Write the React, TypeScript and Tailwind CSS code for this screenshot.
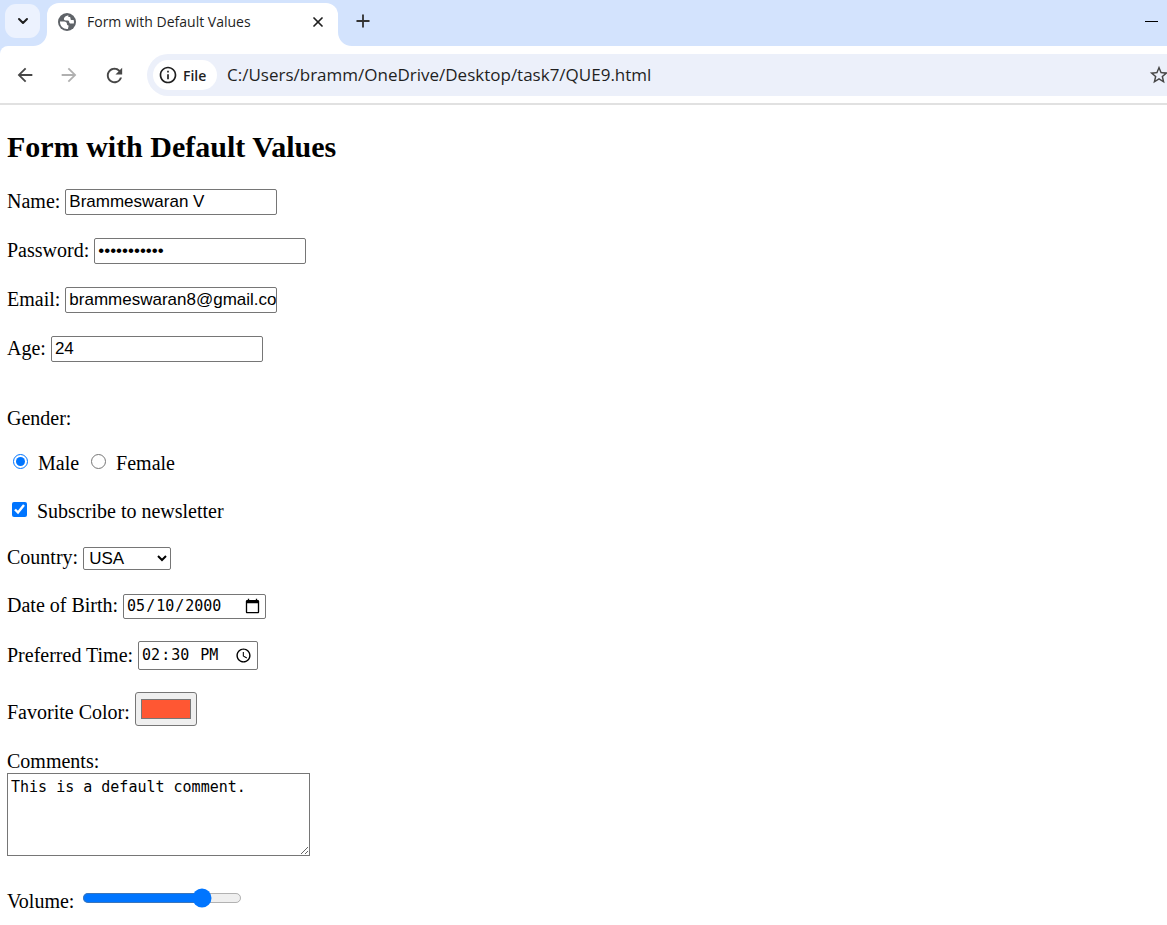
import React from "react";
import { MdArrowBack, MdArrowForward, MdRefresh, MdOutlineInfo, MdStarOutline } from "react-icons/md";
import { ChevronDown, Plus, X } from "lucide-react";

const box = "border border-[#767676] rounded-[2px] bg-white text-black outline-none";
const textBox = "h-[26px] w-[212px] pl-[3px] font-['Liberation_Sans',Arial,sans-serif] text-[17px] leading-5";
const mono = "font-['DejaVu_Sans_Mono',monospace] text-[15px]";
const picker = "[&::-webkit-calendar-picker-indicator]:size-[17px]";

function Globe() {
  return (
    <svg viewBox="0 0 18 18" className="size-[18px] shrink-0" aria-hidden="true">
      <circle cx="9" cy="9" r="9" fill="#5f6368" />
      <path
        d="M10.500 2.200C8.500 2.600 6.500 3.800 6 5.200c-.4 1.300.5 2.300 1.800 2.300h1.700c1.100 0 1.700.6 1.700 1.600 0 .9.6 1.500 1.500 1.500h3.100c.3-1.300.2-2.500-.1-3.600h-1.600c-1.100 0-1.600-.6-1.600-1.600 0-.8-.5-1.300-1.300-1.300-.9 0-1.300-1-.7-1.900z"
        fill="#fff"
      />
      <path
        d="M2 8.600h4.200c1.700 0 2.800 1 2.800 2.600 0 .7.300 1 .9 1.100.6.1.8.5.6 1.100l-.6 2.500c-.3.1-.6.100-.9.100C5.100 16 2 12.900 2 9z"
        fill="#fff"
      />
    </svg>
  );
}

function Flare({ className }: { className: string }) {
  return (
    <svg viewBox="0 0 14 14" className={`absolute bottom-0 size-[14px] text-white ${className}`} aria-hidden="true">
      <path d="M14 0v14H0C8 14 14 8 14 0z" fill="currentColor" />
    </svg>
  );
}

function TabStrip() {
  return (
    <header className="flex h-[46px] items-start bg-[#d3e3fd]">
      <button aria-label="Search tabs" className="ml-[5px] mt-1 flex h-[34px] w-[35px] items-center justify-center rounded-[11px] bg-[#ecf2fe]">
        <ChevronDown className="size-4 text-[#1f1f1f]" strokeWidth={3} />
      </button>
      <div className="relative ml-[7px] mt-[3px] flex h-[43px] w-[291px] items-center rounded-t-[12px] bg-white pb-[6px] pl-[11px] pr-3">
        <Flare className="-left-[14px]" />
        <Flare className="-right-[14px] -scale-x-100" />
        <Globe />
        <span className="ml-[11px] grow whitespace-nowrap font-['Open_Sans','Noto_Sans',sans-serif] text-[14px] text-[#1f1f1f]">
          Form with Default Values
        </span>
        <button aria-label="Close tab"><X className="size-4 text-[#1f1f1f]" strokeWidth={2.6} /></button>
      </div>
      <button aria-label="New tab" className="ml-[15px] mt-[11px]"><Plus className="size-5 text-[#333]" strokeWidth={2.2} /></button>
      <button aria-label="Minimize" className="ml-auto mr-[9px] mt-[21px] h-px w-[13px] bg-black" />
    </header>
  );
}

function Toolbar() {
  return (
    <div className="bg-[#d3e3fd]">
      <nav className="flex h-[59px] items-center rounded-tl-[8px] border-b-2 border-[#e1e1e1] bg-white pt-px">
        <button aria-label="Back" className="ml-[14px]"><MdArrowBack className="size-[22px] text-[#474747]" /></button>
        <button aria-label="Forward" className="ml-[22px]"><MdArrowForward className="size-[22px] text-[#b0b0b0]" /></button>
        <button aria-label="Reload" className="ml-[23px]"><MdRefresh className="size-[23px] text-[#474747]" /></button>
        <div className="ml-[21px] flex h-[42px] grow items-center rounded-l-full bg-[#ecf0fa] pl-[6px]">
          <button className="flex h-[30px] w-[64px] items-center gap-[5px] rounded-full bg-white pl-[5px] font-['Open_Sans','Noto_Sans',sans-serif] text-[14px] font-semibold text-[#1f1f1f]">
            <MdOutlineInfo className="size-5 shrink-0" />
            File
          </button>
          <input
            aria-label="Address"
            defaultValue="C:/Users/bramm/OneDrive/Desktop/task7/QUE9.html"
            className="ml-[10px] grow bg-transparent font-['Open_Sans','Noto_Sans',sans-serif] text-[17px] text-[#1f1f1f] outline-none"
          />
          <button aria-label="Bookmark" className="-mr-[3px]"><MdStarOutline className="size-[22px] text-[#474747]" /></button>
        </div>
      </nav>
    </div>
  );
}

function Field({ id, label, align = "items-center", children }: { id: string; label: string; align?: string; children: React.ReactNode }) {
  return (
    <div className={`flex gap-[5px] ${align}`}>
      <label htmlFor={id} className="pb-[2px] leading-6">{label}</label>
      {children}
    </div>
  );
}

export default function App() {
  return (
    <div className="overflow-hidden bg-white">
      <TabStrip />
      <Toolbar />
      <main className="px-[7px] pt-[25px] font-['Liberation_Serif','Times_New_Roman',serif] text-[20px] text-black">
        <h2 className="text-[30px] font-bold leading-[34px]">Form with Default Values</h2>
        <form className="mt-[25px]">
          <div className="flex flex-col gap-[23px]">
            <Field id="name" label="Name:"><input id="name" defaultValue="Brammeswaran V" className={`${box} ${textBox}`} /></Field>
            <Field id="password" label="Password:"><input id="password" type="password" defaultValue="secret12345" className={`${box} ${textBox}`} /></Field>
            <Field id="email" label="Email:"><input id="email" type="email" defaultValue="brammeswaran8@gmail.com" className={`${box} ${textBox}`} /></Field>
            <Field id="age" label="Age:"><input id="age" type="number" defaultValue={24} className={`${box} ${textBox}`} /></Field>
          </div>
          <fieldset className="mt-11">
            <legend className="leading-6">Gender:</legend>
            <div className="mt-[21px] flex items-center leading-6">
              <input id="male" type="radio" name="gender" defaultChecked className="mb-[3px] ml-[6px] size-[15px] accent-[#0075ff]" />
              <label htmlFor="male" className="ml-[10px]">Male</label>
              <input id="female" type="radio" name="gender" className="mb-[3px] ml-3 size-[15px] accent-[#0075ff]" />
              <label htmlFor="female" className="ml-[10px]">Female</label>
            </div>
          </fieldset>
          <div className="mt-6 flex items-center leading-6">
            <input id="newsletter" type="checkbox" defaultChecked className="mb-[3px] ml-[5px] size-[15px] accent-[#0075ff]" />
            <label htmlFor="newsletter" className="ml-[10px]">Subscribe to newsletter</label>
          </div>
          <div className="mt-[22px] flex flex-col gap-[22px]">
            <Field id="country" label="Country:">
              <select id="country" className="h-[23px] w-[88px] rounded-[2px] border border-[#767676] bg-white pl-px font-['Liberation_Sans',Arial,sans-serif] text-[17px] leading-5">
                <option>USA</option>
                <option>Canada</option>
              </select>
            </Field>
            <Field id="dob" label="Date of Birth:">
              <input id="dob" type="date" defaultValue="2000-05-10" className={`${box} ${mono} ${picker} h-[25px] w-[143px] px-[2px]`} />
            </Field>
            <Field id="time" label="Preferred Time:">
              <input id="time" type="time" defaultValue="14:30" className={`${box} ${mono} ${picker} h-[29px] w-[120px] px-[2px]`} />
            </Field>
            <Field id="color" label="Favorite Color:" align="items-end">
              <input id="color" type="color" defaultValue="#ff5733" className="h-[34px] w-[62px] rounded-[3px] border border-[#767676] bg-[#efefef] px-[3px] py-[2px]" />
            </Field>
          </div>
          <div className="mt-[23px] flex flex-col items-start">
            <label htmlFor="comments" className="leading-6">Comments:</label>
            <textarea id="comments" defaultValue="This is a default comment." className={`${mono} h-[83px] w-[303px] resize border border-[#767676] p-[3px] leading-5 outline-none`} />
          </div>
          <div className="mt-8 flex items-center gap-2 pb-[10px]">
            <label htmlFor="volume" className="leading-6">Volume:</label>
            <input id="volume" type="range" min={0} max={100} defaultValue={78} className="mb-1 w-32 accent-[#0075ff] [zoom:1.25]" />
          </div>
        </form>
      </main>
    </div>
  );
}
